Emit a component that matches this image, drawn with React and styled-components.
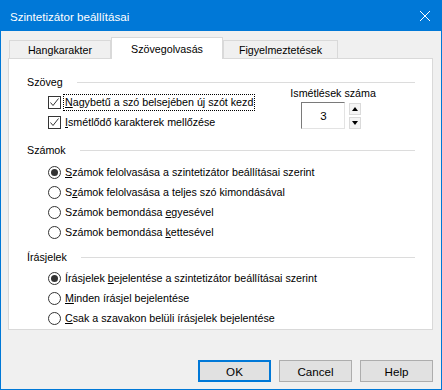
import React from "react";
import styled, { createGlobalStyle } from "styled-components";

const GlobalStyle = createGlobalStyle`
  html, body {
    margin: 0;
    padding: 0;
    background: #ffffff;
  }
  * {
    box-sizing: border-box;
  }
`;

const Window = styled.div`
  width: 442px;
  height: 390px;
  border: 1px solid #0078d7;
  background: #f0f0f0;
  display: flex;
  flex-direction: column;
  font-family: "Liberation Sans", Arial, sans-serif;
  font-size: 10.7px;
  color: #000;
`;

const TitleBar = styled.div`
  height: 30px;
  flex: 0 0 30px;
  background: #0078d7;
  color: #ffffff;
  display: flex;
  align-items: center;
  justify-content: space-between;
  padding: 0 10px 0 9px;
  font-size: 11.6px;
`;

const CloseButton = styled.div`
  width: 12px;
  height: 12px;
  display: flex;
`;

const Body = styled.div`
  flex: 1;
  display: flex;
  flex-direction: column;
  padding: 6px 8px 0 7px;
`;

const TabStrip = styled.div`
  height: 21px;
  display: flex;
  align-items: flex-end;
  padding-left: 1px;
`;

const Tab = styled.div`
  position: relative;
  width: ${(p) => p.$width}px;
  height: ${(p) => (p.$active ? 22 : 18)}px;
  margin-bottom: ${(p) => (p.$active ? -1 : 0)}px;
  background: ${(p) => (p.$active ? "#ffffff" : "#f0f0f0")};
  border: 1px solid #d9d9d9;
  border-bottom: none;
  z-index: ${(p) => (p.$active ? 2 : 1)};
  display: flex;
  align-items: center;
  justify-content: center;
  padding-top: ${(p) => (p.$active ? 0 : 1)}px;
`;

const Panel = styled.div`
  height: 272px;
  background: #ffffff;
  border: 1px solid #d9d9d9;
  padding: 16px 17px 0 18px;
  display: flex;
  flex-direction: column;
`;

const GroupHeader = styled.div`
  height: 14px;
  display: flex;
  align-items: center;
  margin-top: ${(p) => p.$top || 0}px;
`;

const GroupLine = styled.div`
  flex: 1;
  height: 1px;
  background: #dcdcdc;
  margin-left: 14px;
`;

const GroupBody = styled.div`
  display: flex;
  margin-top: ${(p) => p.$top || 0}px;
`;

const OptionList = styled.div`
  display: flex;
  flex-direction: column;
  padding-left: 21px;
  padding-top: ${(p) => p.$top || 0}px;
`;

const OptionRow = styled.label`
  height: 20px;
  display: flex;
  align-items: center;
`;

const CheckBox = styled.span`
  width: 13px;
  height: 13px;
  border: 1px solid #333333;
  background: #ffffff;
  display: flex;
  align-items: center;
  justify-content: center;
  margin-right: 3px;
`;

const Radio = styled.span`
  width: 13px;
  height: 13px;
  border: 1px solid #333333;
  border-radius: 50%;
  background: #ffffff;
  display: flex;
  align-items: center;
  justify-content: center;
  margin-right: 3px;

  &::after {
    content: "";
    width: 7px;
    height: 7px;
    border-radius: 50%;
    background: ${(p) => (p.$checked ? "#333333" : "transparent")};
  }
`;

const OptionText = styled.span`
  padding: 1px 1px;
  outline: ${(p) => (p.$focus ? "1px dotted #000" : "none")};
  outline-offset: 0;
  line-height: 13px;
`;

const Key = styled.span`
  text-decoration: underline;
`;

const SpinGroup = styled.div`
  margin-left: 36px;
  margin-top: -3px;
  display: flex;
  flex-direction: column;
`;

const SpinLabel = styled.div`
  height: 14px;
  line-height: 14px;
`;

const SpinRow = styled.div`
  display: flex;
  margin-top: 2px;
  margin-left: 11px;
  gap: 4px;
`;

const SpinEdit = styled.div`
  width: 44px;
  height: 27px;
  border: 1px solid;
  border-color: #7a7a7a #e3e3e3 #e3e3e3 #7a7a7a;
  display: flex;
  align-items: center;
  justify-content: center;
  font-size: 11.5px;
`;

const SpinButtons = styled.div`
  display: flex;
  flex-direction: column;
  gap: 2px;
  padding-top: 1px;
`;

const SpinButton = styled.div`
  width: 12px;
  height: 12px;
  border: 1px solid #dadada;
  background: #f4f4f4;
  display: flex;
  align-items: center;
  justify-content: center;
`;

const ButtonRow = styled.div`
  display: flex;
  justify-content: flex-end;
  gap: 8px;
  padding-top: 30px;
`;

const Button = styled.div`
  width: 73px;
  height: 22px;
  background: #e1e1e1;
  border: ${(p) => (p.$default ? "2px solid #0078d7" : "1px solid #adadad")};
  display: flex;
  align-items: center;
  justify-content: center;
  font-size: 11.6px;
`;

const Check = () => (
  <svg width="11" height="11" viewBox="0 0 11 11">
    <path d="M1.5 5.5 L4 8.5 L9.5 1.5" fill="none" stroke="#333" strokeWidth="1" />
  </svg>
);

const Arrow = ({ up }) => (
  <svg width="6" height="4" viewBox="0 0 6 4">
    <path d={up ? "M0 4 L3 0 L6 4 Z" : "M0 0 L6 0 L3 4 Z"} fill="#000" />
  </svg>
);

const Option = ({ kind, checked, focus, children }) => (
  <OptionRow>
    {kind === "check" ? (
      <CheckBox>{checked && <Check />}</CheckBox>
    ) : (
      <Radio $checked={checked} />
    )}
    <OptionText $focus={focus}>{children}</OptionText>
  </OptionRow>
);

export default function App() {
  return (
    <>
      <GlobalStyle />
      <Window>
        <TitleBar>
          <span>Szintetizátor beállításai</span>
          <CloseButton>
            <svg width="12" height="12" viewBox="0 0 12 12">
              <path d="M1 1 L11 11 M11 1 L1 11" stroke="#fff" strokeWidth="1" />
            </svg>
          </CloseButton>
        </TitleBar>
        <Body>
          <TabStrip>
            <Tab $width={102}>Hangkarakter</Tab>
            <Tab $width={112} $active>Szövegolvasás</Tab>
            <Tab $width={115}>Figyelmeztetések</Tab>
          </TabStrip>
          <Panel>
            <GroupHeader>
              Szöveg
              <GroupLine />
            </GroupHeader>
            <GroupBody>
              <OptionList $top={3}>
                <Option kind="check" checked focus>
                  <Key>N</Key>agybetű a szó belsejében új szót kezd
                </Option>
                <Option kind="check" checked>
                  <Key>I</Key>smétlődő karakterek mellőzése
                </Option>
              </OptionList>
              <SpinGroup>
                <SpinLabel>Ismétlések száma</SpinLabel>
                <SpinRow>
                  <SpinEdit>3</SpinEdit>
                  <SpinButtons>
                    <SpinButton>
                      <Arrow up />
                    </SpinButton>
                    <SpinButton>
                      <Arrow />
                    </SpinButton>
                  </SpinButtons>
                </SpinRow>
              </SpinGroup>
            </GroupBody>

            <GroupHeader $top={11}>
              Számok
              <GroupLine />
            </GroupHeader>
            <OptionList $top={5}>
              <Option kind="radio" checked>
                <Key>S</Key>zámok felolvasása a szintetizátor beállításai szerint
              </Option>
              <Option kind="radio">
                S<Key>z</Key>ámok felolvasása a teljes szó kimondásával
              </Option>
              <Option kind="radio">
                Számok bemondása <Key>e</Key>gyesével
              </Option>
              <Option kind="radio">
                Számok bemondása <Key>k</Key>ettesével
              </Option>
            </OptionList>

            <GroupHeader $top={8}>
              Írásjelek
              <GroupLine />
            </GroupHeader>
            <OptionList $top={4}>
              <Option kind="radio" checked>
                Írásjelek <Key>b</Key>ejelentése a szintetizátor beállításai szerint
              </Option>
              <Option kind="radio">
                <Key>M</Key>inden írásjel bejelentése
              </Option>
              <Option kind="radio">
                <Key>C</Key>sak a szavakon belüli írásjelek bejelentése
              </Option>
            </OptionList>
          </Panel>
          <ButtonRow>
            <Button $default>OK</Button>
            <Button>Cancel</Button>
            <Button>Help</Button>
          </ButtonRow>
        </Body>
      </Window>
    </>
  );
}
